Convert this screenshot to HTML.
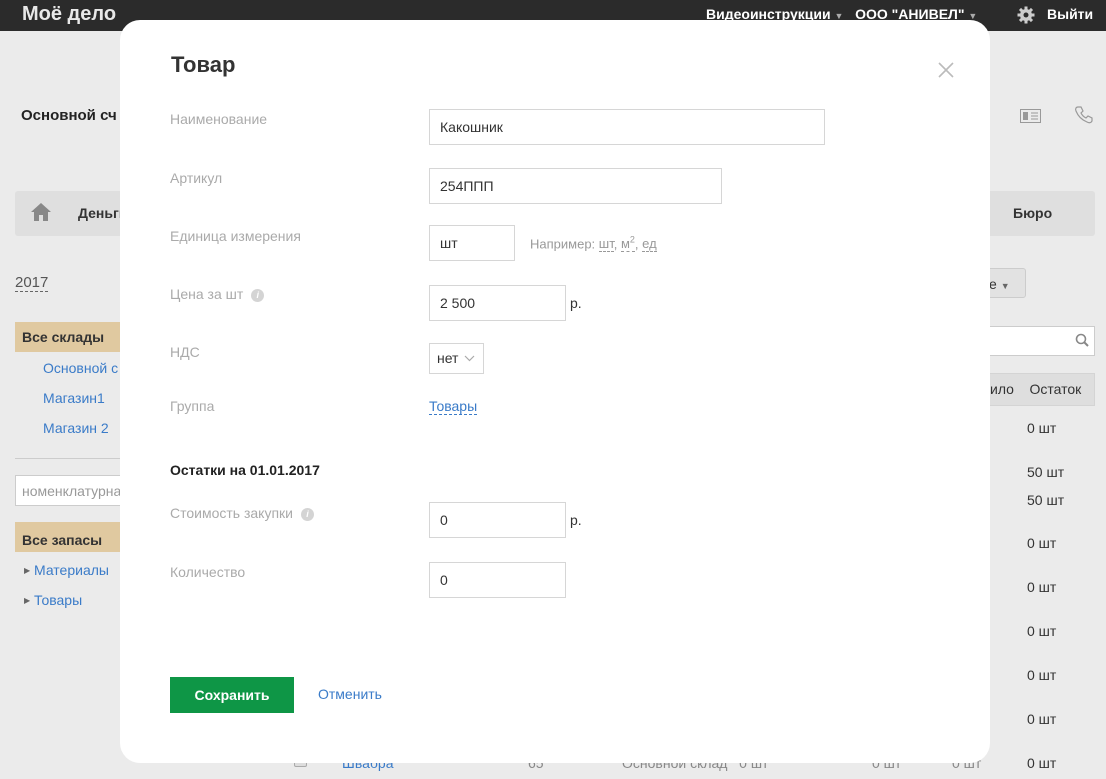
<!DOCTYPE html>
<html><head><meta charset="utf-8"><style>
*{margin:0;padding:0;box-sizing:border-box}
body{width:1106px;height:779px;overflow:hidden;background:#ebebeb;font-family:"Liberation Sans",sans-serif;font-size:14px;color:#333;position:relative}
.a{position:absolute;white-space:nowrap}
.top{position:absolute;left:0;top:0;width:1106px;height:31px;background:#2b2b2b;color:#fff;font-weight:bold}
.link{color:#3a7bc8}
.lbl{position:absolute;left:50px;color:#aaa;font-size:14px}
.inp{position:absolute;left:309px;border:1px solid #d6d6d6;height:36px;padding-left:10px;line-height:34px;font-size:14px;color:#333;background:#fff}
.info{display:inline-block;width:13px;height:13px;border-radius:50%;background:#d4d4d4;color:#fff;font-size:9px;font-weight:bold;text-align:center;line-height:13px;font-style:italic;vertical-align:1px;margin-left:8px}
.dash{border-bottom:1px dashed #3a7bc8}
</style></head><body>
<div class="top">
<div class="a" style="left:22px;top:3px;font-size:20px;color:#e8e8e8">Моё дело</div>
<div class="a" style="left:706px;top:6px;font-size:14px">Видеоинструкции <span style="font-size:9px;color:#aaa">▼</span>&nbsp;&nbsp; ООО "АНИВЕЛ" <span style="font-size:9px;color:#aaa">▼</span></div>
<svg class="a" style="left:1017px;top:6px" width="18" height="18" viewBox="0 0 18 18"><g fill="#ccc"><circle cx="9" cy="9" r="6"/><rect x="7.5" y="0.5" width="3" height="17"/><rect x="0.5" y="7.5" width="17" height="3"/><rect x="7.5" y="0.5" width="3" height="17" transform="rotate(45 9 9)"/><rect x="7.5" y="0.5" width="3" height="17" transform="rotate(-45 9 9)"/></g><circle cx="9" cy="9" r="2.5" fill="#2b2b2b"/></svg>
<div class="a" style="left:1047px;top:6px">Выйти</div>
</div>
<div class="a" style="left:21px;top:107px;font-weight:bold;font-size:15px;color:#222">Основной сч</div>
<div class="a" style="left:15px;top:191px;width:1080px;height:45px;background:#dfdfdf;border-radius:3px"></div>
<svg class="a" style="left:30px;top:202px" width="22" height="20" viewBox="0 0 22 20"><path d="M11 1L1 10h3v9h5v-6h4v6h5v-9h3z" fill="#888"/></svg>
<div class="a" style="left:78px;top:205px;font-weight:bold">Деньги</div>
<div class="a" style="left:1013px;top:205px;font-weight:bold">Бюро</div>
<svg class="a" style="left:1020px;top:109px" width="21" height="14" viewBox="0 0 21 14"><rect x="0.5" y="0.5" width="20" height="13" fill="none" stroke="#999"/><rect x="3" y="3" width="5" height="8" fill="#999"/><path d="M11 4h7M11 7h7M11 10h7" stroke="#999"/></svg>
<svg class="a" style="left:1074px;top:105px" width="20" height="20" viewBox="0 0 20 20"><path d="M4 2l3 0 2 4-2 2c1 2 3 4 5 5l2-2 4 2 0 3c-1 2-3 2-5 1C8 15 4 11 2 6 1 4 2 2 4 2z" fill="none" stroke="#999" stroke-width="1.2"/></svg>
<div class="a" style="left:15px;top:274px;font-size:15px;border-bottom:1px dashed #666;color:#555">2017</div>
<div class="a" style="left:15px;top:322px;width:110px;height:30px;background:#e0c9a0"></div>
<div class="a" style="left:22px;top:329px;font-weight:bold">Все склады</div>
<div class="a link" style="left:43px;top:360px">Основной с</div>
<div class="a link" style="left:43px;top:390px">Магазин1</div>
<div class="a link" style="left:43px;top:420px">Магазин 2</div>
<div class="a" style="left:15px;top:458px;width:110px;height:1px;background:#ccc"></div>
<div class="a" style="left:15px;top:475px;width:110px;height:31px;border:1px solid #ccc;background:#fff;color:#999;padding:7px 6px">номенклатурна</div>
<div class="a" style="left:15px;top:522px;width:110px;height:30px;background:#e0c9a0"></div>
<div class="a" style="left:22px;top:532px;font-weight:bold">Все запасы</div>
<div class="a" style="left:24px;top:566px;font-size:8px;color:#666">▶</div><div class="a link" style="left:34px;top:562px">Материалы</div>
<div class="a" style="left:24px;top:596px;font-size:8px;color:#666">▶</div><div class="a link" style="left:34px;top:592px">Товары</div>
<div class="a" style="left:960px;top:268px;width:66px;height:30px;border:1px solid #ccc;border-radius:3px;background:#e2e2e2;padding:7px 0 0 28px;font-size:14px">е <span style="font-size:9px;color:#666">▼</span></div>
<div class="a" style="left:960px;top:326px;width:135px;height:30px;border:1px solid #ccc;background:#fff"></div>
<svg class="a" style="left:1075px;top:333px" width="14" height="14" viewBox="0 0 14 14"><circle cx="6" cy="6" r="4.5" fill="none" stroke="#888" stroke-width="1.6"/><path d="M9.5 9.5L13 13" stroke="#888" stroke-width="2"/></svg>
<div class="a" style="left:960px;top:373px;width:135px;height:33px;background:#dedede;border:1px solid #d4d4d4"></div>
<div class="a" style="left:990px;top:381px">ило&nbsp;&nbsp;&nbsp; Остаток</div>
<div class="a" style="left:1027px;top:420px">0 шт</div>
<div class="a" style="left:1027px;top:464px">50 шт</div>
<div class="a" style="left:1027px;top:492px">50 шт</div>
<div class="a" style="left:1027px;top:535px">0 шт</div>
<div class="a" style="left:1027px;top:579px">0 шт</div>
<div class="a" style="left:1027px;top:623px">0 шт</div>
<div class="a" style="left:1027px;top:667px">0 шт</div>
<div class="a" style="left:1027px;top:711px">0 шт</div>
<div class="a" style="left:1027px;top:755px">0 шт</div>
<div class="a" style="left:294px;top:757px;width:13px;height:10px;border:1px solid #aaa;border-radius:2px;background:#ddd"></div>
<div class="a link" style="left:342px;top:755px">Швабра</div>
<div class="a" style="left:528px;top:755px;color:#888">65</div>
<div class="a" style="left:622px;top:755px;color:#888">Основной склад &nbsp; 0 шт</div>
<div class="a" style="left:872px;top:755px;color:#888">0 шт</div>
<div class="a" style="left:952px;top:755px;color:#888">0 шт</div>

<div class="a" style="left:120px;top:20px;width:870px;height:743px;background:#fff;border-radius:20px">
<div class="a" style="left:51px;top:32px;font-size:22px;font-weight:bold;color:#333">Товар</div>
<svg class="a" style="left:818px;top:42px" width="16" height="16" viewBox="0 0 16 16"><path d="M1 1L15 15M15 1L1 15" stroke="#bbb" stroke-width="1.6"/></svg>
<div class="lbl" style="top:91px">Наименование</div>
<div class="inp" style="top:89px;width:396px">Какошник</div>
<div class="lbl" style="top:150px">Артикул</div>
<div class="inp" style="top:148px;width:293px">254ППП</div>
<div class="lbl" style="top:208px">Единица измерения</div>
<div class="inp" style="top:205px;width:86px">шт</div>
<div class="a" style="left:410px;top:215px;font-size:13px;color:#999">Например: <span class="dash" style="border-color:#999">шт</span>, <span class="dash" style="border-color:#999">м<sup style="font-size:9px">2</sup></span>, <span class="dash" style="border-color:#999">ед</span></div>
<div class="lbl" style="top:266px">Цена за шт<span class="info">i</span></div>
<div class="inp" style="top:265px;width:137px">2 500</div>
<div class="a" style="left:450px;top:275px">р.</div>
<div class="lbl" style="top:324px">НДС</div>
<div class="inp" style="top:323px;width:55px;height:31px;line-height:29px;padding-left:7px">нет <svg width="11" height="7" viewBox="0 0 11 7" style="vertical-align:1px;margin-left:2px"><path d="M1 1l4.5 4.5L10 1" fill="none" stroke="#aaa" stroke-width="1.2"/></svg></div>
<div class="lbl" style="top:378px">Группа</div>
<div class="a link" style="left:309px;top:378px;border-bottom:1px dashed #3a7bc8">Товары</div>
<div class="a" style="left:50px;top:442px;font-weight:bold;color:#222">Остатки на 01.01.2017</div>
<div class="lbl" style="top:485px">Стоимость закупки<span class="info">i</span></div>
<div class="inp" style="top:482px;width:137px">0</div>
<div class="a" style="left:450px;top:492px">р.</div>
<div class="lbl" style="top:544px">Количество</div>
<div class="inp" style="top:542px;width:137px">0</div>
<div class="a" style="left:50px;top:657px;width:124px;height:36px;background:#0e9646;color:#fff;font-weight:bold;text-align:center;line-height:36px">Сохранить</div>
<div class="a link" style="left:198px;top:666px">Отменить</div>
</div>
</body></html>
